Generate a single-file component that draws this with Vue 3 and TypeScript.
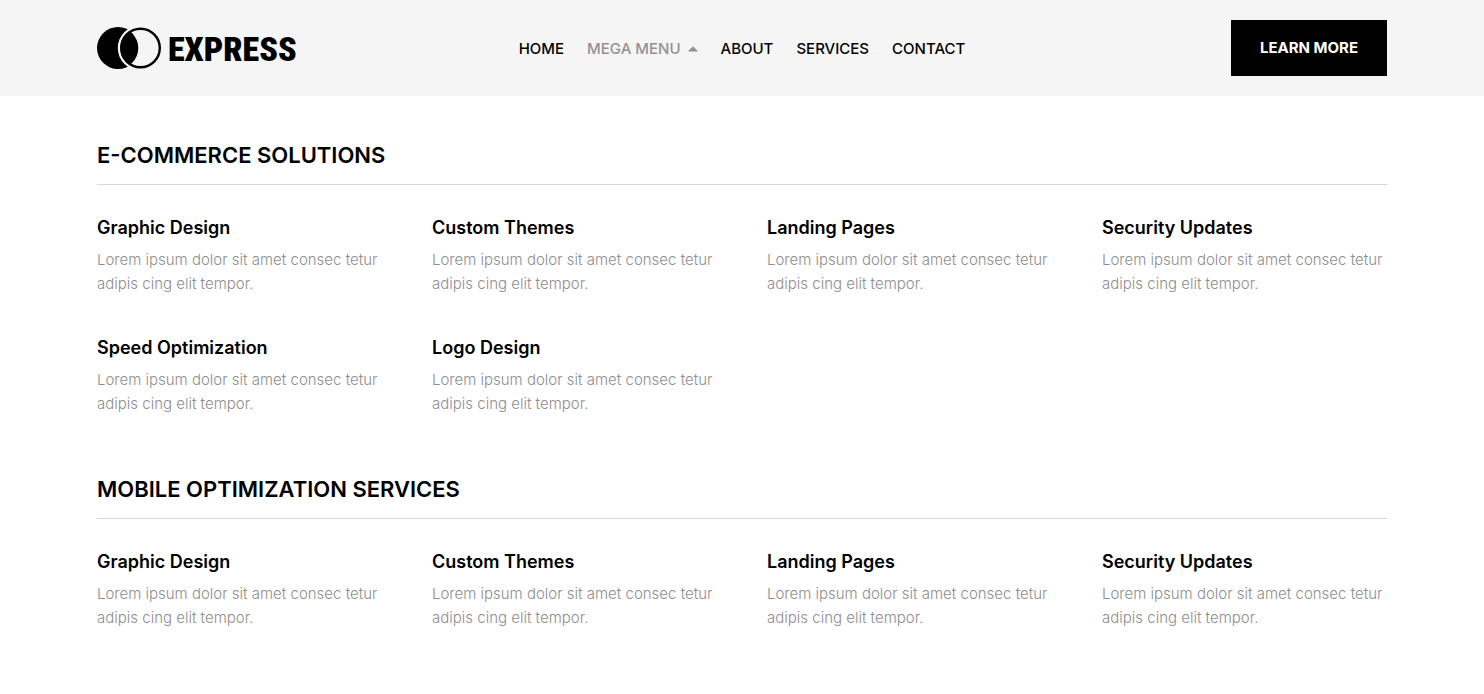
<script setup lang="ts">
interface NavLink {
  label: string
  open?: boolean
}

interface Section {
  title: string
  items: string[]
}

const links: NavLink[] = [
  { label: 'HOME' },
  { label: 'MEGA MENU', open: true },
  { label: 'ABOUT' },
  { label: 'SERVICES' },
  { label: 'CONTACT' },
]

const blurb = 'Lorem ipsum dolor sit amet consec tetur adipis cing elit tempor.'

const sections: Section[] = [
  {
    title: 'E-COMMERCE SOLUTIONS',
    items: [
      'Graphic Design',
      'Custom Themes',
      'Landing Pages',
      'Security Updates',
      'Speed Optimization',
      'Logo Design',
    ],
  },
  {
    title: 'MOBILE OPTIMIZATION SERVICES',
    items: ['Graphic Design', 'Custom Themes', 'Landing Pages', 'Security Updates'],
  },
]
</script>

<template>
  <div class="page">
    <header class="header">
      <div class="container bar">
        <a class="logo" href="#">
          <svg class="mark" width="64" height="42" viewBox="0 0 64 42" aria-hidden="true">
            <defs>
              <clipPath id="disc"><circle cx="43.5" cy="21" r="20" /></clipPath>
            </defs>
            <circle cx="21" cy="21" r="21" fill="#000" />
            <circle cx="43.5" cy="21" r="22.7" fill="#f5f5f5" />
            <circle cx="20.5" cy="21" r="20.8" fill="#000" clip-path="url(#disc)" />
            <circle cx="43.5" cy="21" r="19.3" fill="none" stroke="#000" stroke-width="2.4" />
          </svg>
          <span class="wordmark">EXPRESS</span>
        </a>
        <nav class="nav" aria-label="Main">
          <a
            v-for="link in links"
            :key="link.label"
            class="link"
            :class="{ open: link.open }"
            href="#"
          >
            {{ link.label }}
            <svg v-if="link.open" class="caret" width="10" height="6" viewBox="0 0 10 6" aria-hidden="true">
              <path d="M0.8 5.5 Q0 5.5 0.5 4.7 L4.3 0.9 Q5 0.3 5.7 0.9 L9.5 4.7 Q10 5.5 9.2 5.5 Z" fill="currentColor" />
            </svg>
          </a>
        </nav>
        <button class="cta" type="button">LEARN MORE</button>
      </div>
    </header>

    <main class="container menu">
      <section v-for="section in sections" :key="section.title">
        <h2 class="heading">{{ section.title }}</h2>
        <ul class="grid">
          <li v-for="item in section.items" :key="item">
            <h3 class="title"><a href="#">{{ item }}</a></h3>
            <p class="text">{{ blurb }}</p>
          </li>
        </ul>
      </section>
    </main>
  </div>
</template>

<style>
body {
  margin: 0;
  background: #fff;
}
</style>

<style scoped>
.page {
  font-family: Inter, "Liberation Sans", sans-serif;
  color: #000;
}

.page a {
  color: inherit;
  text-decoration: none;
}

.container {
  box-sizing: border-box;
  width: calc(100% - 48px);
  max-width: 1290px;
  margin: 0 auto;
}

.header {
  background: #f5f5f5;
}

.bar {
  display: grid;
  grid-template-columns: 1fr auto 1fr;
  align-items: center;
  padding: 20px 0;
}

.logo {
  display: flex;
  align-items: center;
  gap: 7px;
}

.mark {
  flex: none;
}

.wordmark {
  padding-top: 2px;
  font: 900 34px/42px "Liberation Sans Narrow", "Roboto Condensed", "Liberation Sans", sans-serif;
}

.nav {
  display: flex;
  gap: 23px;
  padding-top: 2px;
  font-size: 15px;
  font-weight: 500;
  line-height: 24px;
}

.page .link {
  display: flex;
  align-items: center;
  gap: 7px;
}

.page .open {
  color: #929292;
}

.cta {
  justify-self: end;
  min-width: 156px;
  height: 56px;
  padding: 0 24px;
  border: 0;
  background: #000;
  color: #fff;
  font: 700 15px/24px Inter, "Liberation Sans", sans-serif;
  cursor: pointer;
}

.menu {
  display: flex;
  flex-direction: column;
  gap: 57px;
  padding: 43px 0;
}

.heading {
  margin: 0 0 31px;
  padding-bottom: 13px;
  border-bottom: 1px solid #d6d6d6;
  font-size: 22px;
  font-weight: 600;
  line-height: 32px;
}

.grid {
  display: grid;
  grid-template-columns: repeat(4, 1fr);
  gap: 40px 50px;
  margin: 0;
  padding: 0;
  list-style: none;
}

.title {
  margin: 0 0 8px;
  font-size: 18px;
  font-weight: 600;
  line-height: 24px;
}

.text {
  margin: 0;
  color: #8e8e8e;
  font-size: 15px;
  font-weight: 300;
  line-height: 24px;
}
</style>
